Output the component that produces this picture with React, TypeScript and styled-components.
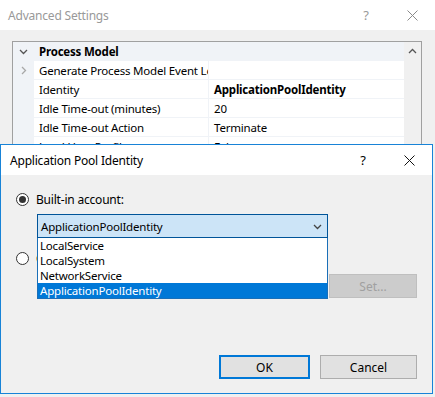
import styled, { createGlobalStyle } from "styled-components";

const GlobalStyle = createGlobalStyle`
  html, body {
    margin: 0;
    padding: 0;
  }
  body {
    background: #f0f0f0;
    font-family: "Segoe UI", "Noto Sans", "DejaVu Sans", sans-serif;
    font-size: 11.5px;
    letter-spacing: -0.2px;
    color: #000;
  }
  * {
    box-sizing: border-box;
  }
`;

const Screen = styled.div`
  position: relative;
  width: 435px;
  height: 397px;
  overflow: hidden;
  background: #f0f0f0;
`;

const Window = styled.div`
  display: flex;
  flex-direction: column;
  height: 100%;
`;

const TitleBar = styled.div<{ $inactive?: boolean }>`
  display: flex;
  align-items: center;
  height: 30px;
  flex-shrink: 0;
  background: #fff;
  padding-left: ${(p) => (p.$inactive ? "8px" : "9px")};
  color: ${(p) => (p.$inactive ? "#999" : "#000")};
`;

const Caption = styled.span`
  flex: 1;
  white-space: nowrap;
  font-size: 12px;
`;

const CaptionButton = styled.span`
  width: 46px;
  height: 100%;
  display: flex;
  align-items: center;
  justify-content: center;
  font-size: 13px;
`;

const Client = styled.div`
  flex: 1;
  padding: 11px 13px 0 12px;
`;

const Grid = styled.div`
  display: flex;
  border: 1px solid #a0a0a0;
  background: #fff;
`;

const Rows = styled.div`
  flex: 1;
  background: #f0f3f7;
`;

const Row = styled.div`
  display: grid;
  grid-template-columns: 20px 174px 1fr;
  column-gap: 1px;
  height: 19px;
  padding-bottom: 1px;
`;

const Gutter = styled.div`
  display: flex;
  align-items: center;
  justify-content: center;
  padding-left: 1px;
`;

const Cell = styled.div<{ $bold?: boolean; $span?: boolean }>`
  display: flex;
  align-items: center;
  overflow: hidden;
  white-space: nowrap;
  padding-left: 5px;
  background: ${(p) => (p.$span ? "transparent" : "#fff")};
  font-weight: ${(p) => (p.$bold ? 700 : 400)};
  grid-column: ${(p) => (p.$span ? "2 / 4" : "auto")};
`;

const Scroll = styled.div`
  width: 17px;
  background: #f0f0f0;
  display: flex;
  justify-content: center;
  padding-top: 5px;
`;

const Dialog = styled.div`
  position: absolute;
  left: 0;
  top: 144px;
  width: 433px;
  height: 250px;
  border: 1px solid #1883d7;
  background: #f0f0f0;
  display: flex;
  flex-direction: column;
`;

const Body = styled.div`
  flex: 1;
  display: flex;
  flex-direction: column;
  padding: 16px 15px 14px 15px;
`;

const RadioRow = styled.label<{ $top?: number }>`
  display: flex;
  align-items: center;
  gap: 7px;
  height: 16px;
  font-size: 12px;
  margin-top: ${(p) => p.$top ?? 0}px;
`;

const RadioDot = styled.span<{ $checked?: boolean }>`
  width: 13px;
  height: 13px;
  border-radius: 50%;
  border: 1px solid #333;
  background: #fff;
  display: flex;
  align-items: center;
  justify-content: center;
  flex-shrink: 0;
  &::after {
    content: "";
    width: 7px;
    height: 7px;
    border-radius: 50%;
    background: ${(p) => (p.$checked ? "#333" : "transparent")};
  }
`;

const ComboWrap = styled.div`
  position: relative;
  margin: 7px 0 0 21px;
  width: 291px;
  z-index: 2;
`;

const Combo = styled.div`
  height: 24px;
  border: 1px solid #005499;
  background: #cce4f7;
  display: flex;
  align-items: center;
  justify-content: space-between;
  padding: 0 5px 0 3px;
`;

const DropList = styled.ul`
  position: absolute;
  left: 0;
  top: 100%;
  width: 100%;
  margin: 0;
  padding: 0;
  list-style: none;
  background: #fff;
  border: 1px solid #1a6fb8;
  border-top: none;
`;

const DropItem = styled.li<{ $selected?: boolean }>`
  height: 15px;
  line-height: 15px;
  padding-left: 2px;
  background: ${(p) => (p.$selected ? "#0078d7" : "transparent")};
  color: ${(p) => (p.$selected ? "#fff" : "#000")};
`;

const AccountRow = styled.div`
  display: flex;
  gap: 7px;
  margin: 8px 0 0 21px;
  height: 24px;
`;

const TextBox = styled.div`
  flex: 1;
  border: 1px solid #ccc;
  background: #f0f0f0;
`;

const Button = styled.button<{ $primary?: boolean; $width: number }>`
  width: ${(p) => p.$width}px;
  height: 24px;
  font: inherit;
  font-size: 12px;
  padding: 0;
  color: #000;
  background: #e1e1e1;
  border: ${(p) => (p.$primary ? "2px solid #0078d7" : "1px solid #adadad")};
  &:disabled {
    background: #cccccc;
    border-color: #bfbfbf;
    color: #a0a0a0;
  }
`;

const Footer = styled.div`
  margin-top: auto;
  display: flex;
  justify-content: flex-end;
  gap: 10px;
`;

function Chevron({ dir, color }: { dir: "down" | "up" | "right"; color: string }) {
  const d =
    dir === "down" ? "M1 3 L4.5 6.5 L8 3" : dir === "up" ? "M1 6 L4.5 2.5 L8 6" : "M3 1 L6.5 4.5 L3 8";
  return (
    <svg width="9" height="9" viewBox="0 0 9 9">
      <path d={d} fill="none" stroke={color} strokeWidth="1.3" />
    </svg>
  );
}

function CloseX({ color }: { color: string }) {
  return (
    <svg width="11" height="11" viewBox="0 0 11 11">
      <path d="M0.5 0.5 L10.5 10.5 M10.5 0.5 L0.5 10.5" stroke={color} strokeWidth="1" />
    </svg>
  );
}

const props = [
  { name: "Generate Process Model Event Log Entry", value: "", expand: true },
  { name: "Identity", value: "ApplicationPoolIdentity", bold: true },
  { name: "Idle Time-out (minutes)", value: "20" },
  { name: "Idle Time-out Action", value: "Terminate" },
  { name: "Load User Profile", value: "False" },
  { name: "Maximum Worker Processes", value: "1" },
  { name: "Ping Enabled", value: "True" },
  { name: "Ping Maximum Response Time", value: "90" },
  { name: "Ping Period (seconds)", value: "30" },
  { name: "Shutdown Time Limit (seconds)", value: "90" },
  { name: "Startup Time Limit (seconds)", value: "90" },
  { name: "Process Orphaning", value: "" },
  { name: "Enabled", value: "False" },
  { name: "Executable", value: "" },
  { name: "Enabled", value: "True" },
  { name: "Executable", value: "" },
  { name: "Enabled", value: "True" },
];

const accounts = ["LocalService", "LocalSystem", "NetworkService", "ApplicationPoolIdentity"];

export default function App() {
  return (
    <Screen>
      <GlobalStyle />
      <Window>
        <TitleBar $inactive>
          <Caption>Advanced Settings</Caption>
          <CaptionButton>?</CaptionButton>
          <CaptionButton>
            <CloseX color="#8a8a8a" />
          </CaptionButton>
        </TitleBar>
        <Client>
          <Grid>
            <Rows>
              <Row>
                <Gutter>
                  <Chevron dir="down" color="#555" />
                </Gutter>
                <Cell $span $bold>
                  Process Model
                </Cell>
              </Row>
              {props.map((p, i) => (
                <Row key={i}>
                  <Gutter>{p.expand && <Chevron dir="right" color="#a8a8a8" />}</Gutter>
                  <Cell>{p.name}</Cell>
                  <Cell $bold={p.bold}>{p.value}</Cell>
                </Row>
              ))}
            </Rows>
            <Scroll>
              <Chevron dir="up" color="#555" />
            </Scroll>
          </Grid>
        </Client>
      </Window>

      <Dialog>
        <TitleBar>
          <Caption>Application Pool Identity</Caption>
          <CaptionButton>?</CaptionButton>
          <CaptionButton>
            <CloseX color="#111" />
          </CaptionButton>
        </TitleBar>
        <Body>
          <RadioRow>
            <RadioDot $checked />
            <span>Built-in account:</span>
          </RadioRow>
          <ComboWrap>
            <Combo>
              <span>ApplicationPoolIdentity</span>
              <Chevron dir="down" color="#444" />
            </Combo>
            <DropList>
              {accounts.map((a) => (
                <DropItem key={a} $selected={a === "ApplicationPoolIdentity"}>
                  {a}
                </DropItem>
              ))}
            </DropList>
          </ComboWrap>
          <RadioRow $top={12}>
            <RadioDot />
            <span>Custom account:</span>
          </RadioRow>
          <AccountRow>
            <TextBox />
            <Button $width={88} disabled>
              Set...
            </Button>
          </AccountRow>
          <Footer>
            <Button $primary $width={91}>
              OK
            </Button>
            <Button $width={97}>Cancel</Button>
          </Footer>
        </Body>
      </Dialog>
    </Screen>
  );
}
